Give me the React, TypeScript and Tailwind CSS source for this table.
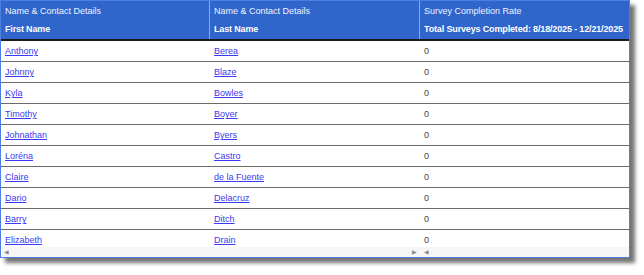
const rows = [
  ["Anthony", "Berea"],
  ["Johnny", "Blaze"],
  ["Kyla", "Bowles"],
  ["Timothy", "Boyer"],
  ["Johnathan", "Byers"],
  ["Loréna", "Castro"],
  ["Claire", "de la Fuente"],
  ["Dario", "Delacruz"],
  ["Barry", "Ditch"],
  ["Elizabeth", "Drain"],
];

function HeaderCell({ group, title, last }: { group: string; title: string; last?: boolean }) {
  return (
    <div
      className={`flex flex-col gap-[6px] overflow-hidden whitespace-nowrap px-[4px] pt-[4px] ${
        last ? "" : "border-r border-[#8eaae6]"
      }`}
    >
      <div className="leading-[12px] text-[#eef3ff]">{group}</div>
      <div className="font-bold leading-[12px] tracking-[-0.15px] text-white">{title}</div>
    </div>
  );
}

export default function App() {
  return (
    <div className="h-[275px] w-[644px] bg-white font-['Liberation_Sans',Arial,sans-serif] text-[9px]">
      <div className="w-[630px] border border-[#4d7fe0] bg-white shadow-[5px_5px_4px_rgba(0,0,0,0.55)]">
        <div className="grid h-[40px] grid-cols-[209px_210px_1fr] border-b-2 border-[#1c1c1c] bg-[#3065cc]">
          <HeaderCell group="Name & Contact Details" title="First Name" />
          <HeaderCell group="Name & Contact Details" title="Last Name" />
          <HeaderCell group="Survey Completion Rate" title="Total Surveys Completed: 8/18/2025 - 12/21/2025" last />
        </div>
        <div className="h-[206px] overflow-hidden">
          {rows.map(([first, last]) => (
            <div
              key={first}
              className="grid h-[21px] grid-cols-[209px_210px_1fr] items-center border-b border-[#6b6b6b] pt-[2px]"
            >
              <a href="#" className="px-[4px] text-[#3a3af0] underline">
                {first}
              </a>
              <a href="#" className="px-[4px] text-[#3a3af0] underline">
                {last}
              </a>
              <span className="px-[4px] text-[#444]">0</span>
            </div>
          ))}
        </div>
        <div className="grid h-[10px] grid-cols-[419px_1fr] bg-[#f6f6f6] text-[6px] leading-[10px] text-[#8a8a8a]">
          <div className="flex justify-between px-[3px]">
            <span>◀</span>
            <span>▶</span>
          </div>
          <div className="px-[4px]">
            <span>◀</span>
          </div>
        </div>
      </div>
    </div>
  );
}
